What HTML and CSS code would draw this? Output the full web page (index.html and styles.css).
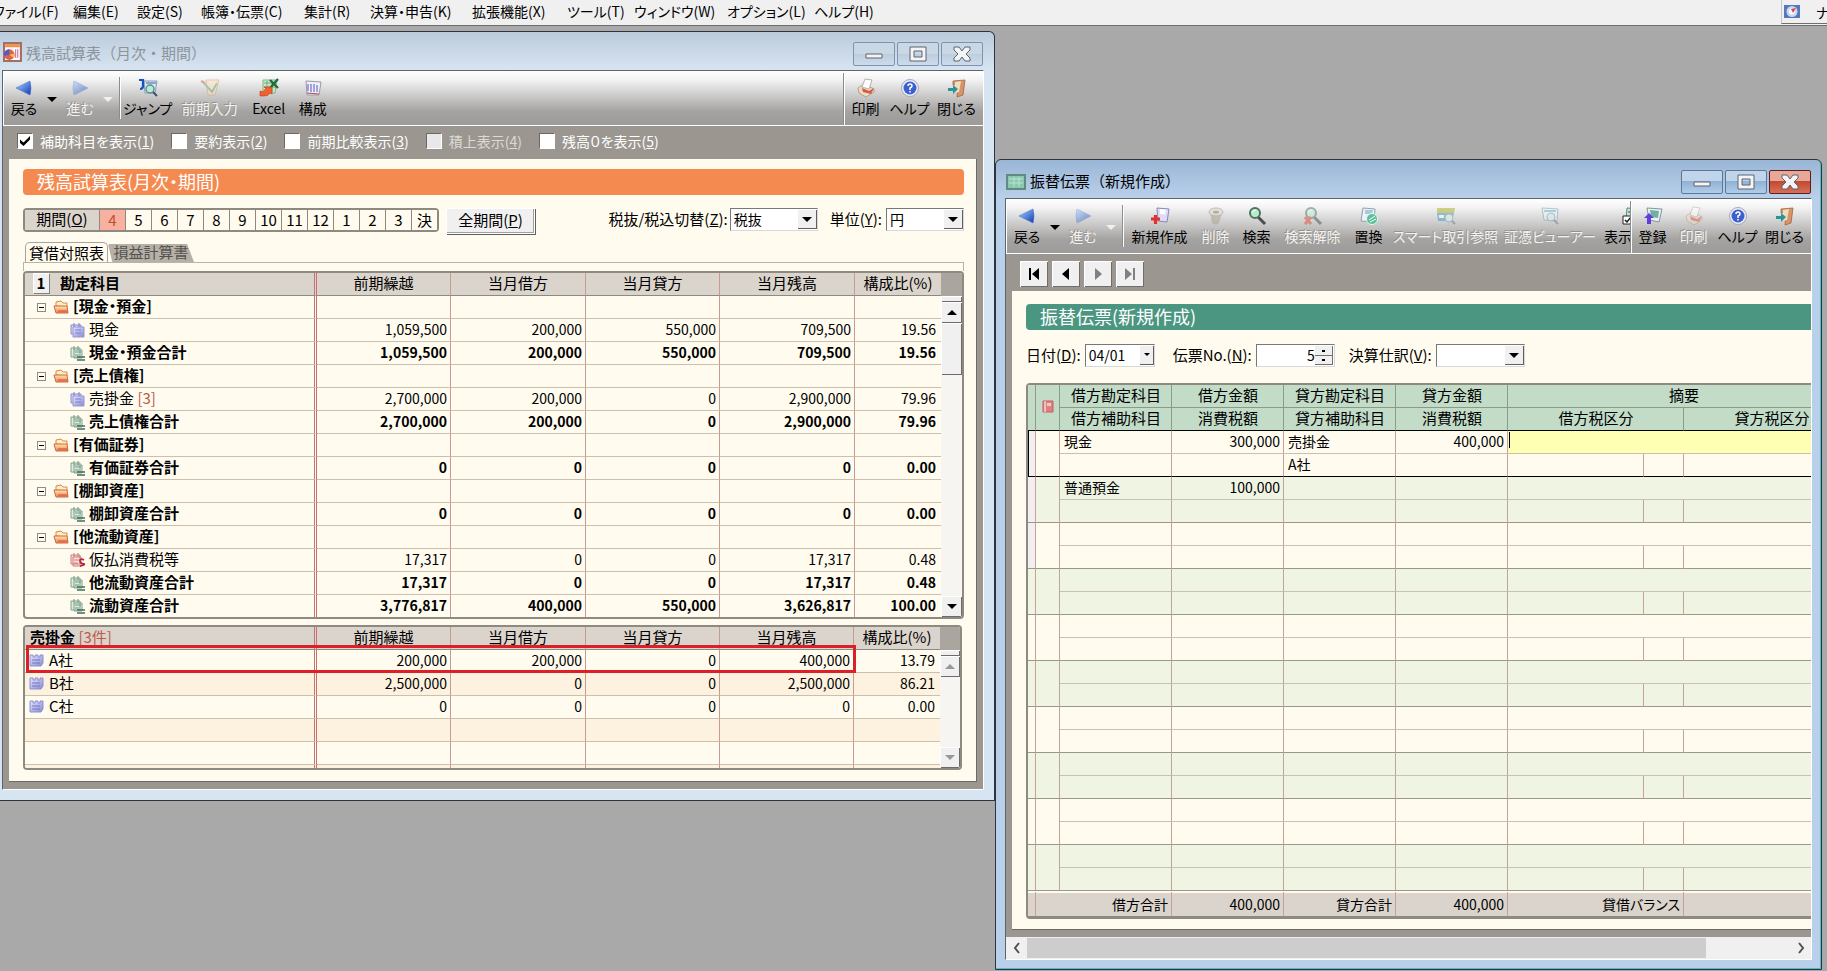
FILE: index.html
```html
<!DOCTYPE html>
<html lang="ja">
<head>
  <meta charset="UTF-8">
  <meta name="viewport" content="width=device-width, initial-scale=1.0">
  <title>残高試算表・振替伝票</title>
  <link rel="stylesheet" href="styles.css">
</head>
<body>
  <svg class="symbols" aria-hidden="true">
    <defs>
      <linearGradient id="blue" x1="0" y1="0" x2="1" y2="1"><stop offset="0" stop-color="#a8d8ff"/><stop offset="1" stop-color="#1038b8"/></linearGradient>
      <linearGradient id="orange" x1="0" y1="0" x2="0" y2="1"><stop offset="0" stop-color="#ffe8b8"/><stop offset="1" stop-color="#f08048"/></linearGradient>
      <linearGradient id="lilac" x1="0" y1="0" x2="1" y2="1"><stop offset="0" stop-color="#e4e8ff"/><stop offset="1" stop-color="#8888d0"/></linearGradient>
      <symbol id="i-back" viewBox="0 0 20 20"><path d="M2 10 16 3Q18 10 16 17Z" fill="url(#blue)" stroke="#4a78c8" stroke-width=".6"/></symbol>
      <symbol id="i-next" viewBox="0 0 20 20"><path d="M18 10 4 3Q2 10 4 17Z" fill="url(#blue)" stroke="#4a78c8" stroke-width=".6"/></symbol>
      <symbol id="i-jump" viewBox="0 0 20 20"><path d="M6 3h13l-2 12H7z" fill="#dce6f4" stroke="#8c9cb4"/><path d="M8 4h10v2H8z" fill="#88a4d0"/><path d="M1 2h4v6q0 3-3 3" fill="none" stroke="#1c50c0" stroke-width="2.2"/><circle cx="12" cy="11" r="4" fill="#b8ecd0" stroke="#5a8c94" stroke-width="1.4"/><path d="m15 14 4 4" stroke="#405070" stroke-width="2"/></symbol>
      <symbol id="i-entry" viewBox="0 0 20 20"><path d="M6 2h13l-4 15H8z" fill="#fce4c0" stroke="#d8a070"/><path d="m2 3 10 11 5-9" fill="none" stroke="#70a878" stroke-width="2"/><path d="m1 3 4 2" stroke="#e06048" stroke-width="2"/></symbol>
      <symbol id="i-excel" viewBox="0 0 20 20"><path d="M4 2h14l-2 13H4z" fill="#c8e8cc" stroke="#80b088"/><path d="M5 5h12M5 9h12M8 3v11M13 3v11" stroke="#70a878"/><path d="m11 2 8 8M19 1l-8 9" stroke="#1c6c38" stroke-width="2.2"/><path d="M1 18v-5l3 1 3-4-2-1h8v7l-2-1-3 3-2-1v1z" fill="#f06030" stroke="#c83c18" stroke-width=".6"/></symbol>
      <symbol id="i-build" viewBox="0 0 20 20"><path d="m3 3 15 1-2 13H4z" fill="#f0f0fa" stroke="#9c98a8"/><path d="M5 6v7M8 6v8M11 6v8M14 7v7" stroke="#7070c8" stroke-width="1.2"/><path d="M4 15l12 1" stroke="#b04848"/></symbol>
      <symbol id="i-print" viewBox="0 0 20 20"><path d="m2 10 6-4 10 5v3l-8 5-7-4z" fill="#e8dcc4" stroke="#a89474" stroke-width=".8"/><path d="m6 9 3-8 7 1-3 9z" fill="#fff" stroke="#a8a0a0" stroke-width=".8"/><path d="m6 10 7 3 5-3-3 6-8-2z" fill="#d85840"/></symbol>
      <symbol id="i-help" viewBox="0 0 20 20"><circle cx="10" cy="10" r="8.5" fill="#eceef8" stroke="#a4a8b8"/><circle cx="10" cy="10" r="6.5" fill="#3c60d0"/><path d="M8 8q0-2 2-2t2 2q0 1-2 2v2M10 13v1.400" fill="none" stroke="#fff" stroke-width="1.500"/></symbol>
      <symbol id="i-exit" viewBox="0 0 20 20"><path d="m6 3 12-1-2 15-6 2 1-13-5 1z" fill="#d89468" stroke="#9c6444" stroke-width=".8"/><path d="m8 4 6-1-2 11-4 1z" fill="#f0dcc0"/><path d="M1 10h5V7l5 4-5 5v-3H1z" fill="#2c9494"/></symbol>
      <symbol id="i-new" viewBox="0 0 20 20"><path d="m7 2 12 1-2 13-9-1z" fill="#dcdcf4" stroke="#8888b8"/><path d="m10 3 6 .500-1 5-5-.500z" fill="#fff"/><path d="M1 13h9M5.500 9v9" stroke="#e03030" stroke-width="3.200"/></symbol>
      <symbol id="i-trash" viewBox="0 0 20 20"><path d="m4 6 2 11q4 3 7 0l3-10z" fill="#a8a090"/><ellipse cx="10" cy="6" rx="7" ry="4" fill="#dcd8cc" stroke="#908878"/><ellipse cx="10" cy="6" rx="3" ry="1.500" fill="#807868"/></symbol>
      <symbol id="i-find" viewBox="0 0 20 20"><path d="m11 11 7 7" stroke="#4c4c54" stroke-width="3"/><circle cx="8" cy="7" r="5" fill="#b8ecc8" stroke="#4c7464" stroke-width="2"/><path d="M5 7q1-3 4-3" fill="none" stroke="#fff"/></symbol>
      <symbol id="i-unfind" viewBox="0 0 20 20"><use href="#i-find"/><path d="m2 11 6 7M8 11l-6 7" stroke="#e04838" stroke-width="3"/></symbol>
      <symbol id="i-swap" viewBox="0 0 20 20"><path d="m4 2 12 1-1 13-13-1z" fill="#eef2f8" stroke="#90a0b0"/><path d="M6 4h8l-1 4H6z" fill="#a8c8e0"/><circle cx="13" cy="13" r="5.5" fill="#58c098" stroke="#e4f8f0"/><path d="m10 14 6-4M11 16l6-3" stroke="#fff"/></symbol>
      <symbol id="i-smart" viewBox="0 0 20 20"><path d="M1 2h18l-1 5H1z" fill="#a8b020"/><path d="M1 7h17l-2 8H2z" fill="#3898c0"/><path d="M3 9h5v3H3z" fill="#fff"/><circle cx="13" cy="12" r="4" fill="#d8f0f0" stroke="#68a0b0"/><path d="m16 15 3 3" stroke="#70788c" stroke-width="2"/></symbol>
      <symbol id="i-view" viewBox="0 0 20 20"><path d="m2 2 16 1-1 12-13-1z" fill="#eef4f8" stroke="#70a0b8"/><path d="M4 5h12" stroke="#70b0c8" stroke-width="2"/><circle cx="11" cy="11" r="4" fill="#d8f0f0" stroke="#68a0b0"/><path d="m14 14 4 4" stroke="#70788c" stroke-width="2"/></symbol>
      <symbol id="i-show" viewBox="0 0 20 20"><path d="m5 2 13 1-1 12H4z" fill="#c8e4d8" stroke="#608878"/><path d="M6 5h11v2H6z" fill="#68a890"/><path d="M1 10h8v8H1z" fill="#fff" stroke="#222"/><path d="m3 14 2 2 4-5" fill="none" stroke="#111" stroke-width="1.400"/></symbol>
      <symbol id="i-save" viewBox="0 0 20 20"><path d="m4 2 15 1-3 13-10-2z" fill="#e8f0f0" stroke="#8098a0"/><path d="m7 4 9 1-1 7-7-1z" fill="#70b0a0"/><path d="M6 7 1 12h3v6h4v-6h3z" fill="#6040d8"/></symbol>
      <symbol id="i-folder" viewBox="0 0 16 16"><path d="M3 7V3l5-1 2 2h4v4z" fill="#fff0c0" stroke="#d88850"/><path d="M1 7h13l1 7H3z" fill="url(#orange)" stroke="#c86840"/><path d="M5 12h9" stroke="#d84838"/></symbol>
      <symbol id="i-item" viewBox="0 0 16 16"><path d="M2 3h10v9H2z" fill="#d8dcf8" stroke="#8888c8"/><path d="M4 5h11v10H4z" fill="url(#lilac)" stroke="#9898d8"/><path d="M5 1v4M10 1v4M6 8h6M6 11h6" stroke="#8080c8"/></symbol>
      <symbol id="i-sum" viewBox="0 0 16 16"><path d="M2 3h9v9H2zM5 5h8v8H5z" fill="#e0eade" stroke="#80a490"/><path d="M5 1v4M9 1v4M6 7h6M6 10h4" stroke="#709880"/><path d="M8 12h8M8 15h8" stroke="#40705c" stroke-width="1.600"/></symbol>
      <symbol id="i-tax" viewBox="0 0 16 16"><path d="M2 3h9v9H2zM4 5h8v9H4z" fill="#fbe4e0" stroke="#d07878"/><path d="M5 1v4M9 1v4M5 8h6M5 11h4" stroke="#d07878"/><path d="M15 8q-4-2-4 .800t3.500 3-3.500 2.500" fill="none" stroke="#b02840" stroke-width="1.600"/></symbol>
      <symbol id="i-sub" viewBox="0 0 16 16"><path d="M1 2h3v2h2V2h3v2h2V2h3v8l-2 3H1z" fill="url(#lilac)" stroke="#8c90d0"/><path d="M3 7h8M3 10h8" stroke="#7478c0"/></symbol>
      <symbol id="i-min" viewBox="0 0 24 18"><path d="M4 9h16v4H4z" fill="#f4f4f4" stroke="#5c6470"/></symbol>
      <symbol id="i-max" viewBox="0 0 24 18"><path fill-rule="evenodd" d="M4 2h16v14H4zM8 6v6h8V6z" fill="#f4f4f4" stroke="#5c6470"/></symbol>
      <symbol id="i-close" viewBox="0 0 24 18"><path d="M4 2h5l3 4 3-4h5v3l-4 4 4 4v3h-5l-3-4-3 4H4v-3l4-4-4-4z" fill="#f4f4f4" stroke="#5c6470"/></symbol>
    </defs>
  </svg>

  <nav class="menubar">
    <div class="menu">
      <button>ファイル(F)</button>
      <button>編集(E)</button>
      <button>設定(S)</button>
      <button>帳簿・伝票(C)</button>
      <button>集計(R)</button>
      <button>決算・申告(K)</button>
      <button>拡張機能(X)</button>
      <button>ツール(T)</button>
      <button>ウィンドウ(W)</button>
      <button>オプション(L)</button>
      <button>ヘルプ(H)</button>
    </div>
    <div class="navi">
      <svg viewBox="0 0 16 13"><path d="M0 0h16v13H0z" fill="#5478c0"/><circle cx="8" cy="6.500" r="5.5" fill="#c8d8f0"/><circle cx="8" cy="6.500" r="3" fill="#fff"/><path d="m7 4 2 4 3-5z" fill="#d84848"/></svg>
      <span>ナ</span>
    </div>
  </nav>

  <main class="desktop">
    <!-- 残高試算表 -->
    <section class="window balance">
      <header class="titlebar">
        <svg class="app-icon" viewBox="0 0 18 19"><path d="M1 1h16v17H1z" fill="#fff" stroke="#a07060" stroke-width="2"/><path d="M2 2h14v3H2z" fill="#f09050"/><circle cx="6" cy="12" r="5" fill="#e06048"/><path d="M6 12V7a5 5 0 0 0-5 6z" fill="#5058d0"/><path d="m6 12 4 3a5 5 0 0 0 1-4z" fill="#f8c040"/><path d="M12 7v8M14 7v8" stroke="#d060a0"/></svg>
        <h1>残高試算表（月次・期間）</h1>
        <button class="win-btn" aria-label="最小化"><svg><use href="#i-min"/></svg></button>
        <button class="win-btn" aria-label="最大化"><svg><use href="#i-max"/></svg></button>
        <button class="win-btn" aria-label="閉じる"><svg><use href="#i-close"/></svg></button>
      </header>
      <div class="frame">
        <div class="toolbar">
          <div class="tools">
            <button class="tool nav-tool"><svg><use href="#i-back"/></svg>戻る</button>
            <button class="drop" aria-label="履歴"></button>
            <button class="tool nav-tool" disabled><svg><use href="#i-next"/></svg>進む</button>
            <button class="drop" aria-label="履歴" disabled></button>
            <span class="sep"></span>
            <button class="tool"><svg><use href="#i-jump"/></svg>ジャンプ</button>
            <button class="tool wide" disabled><svg><use href="#i-entry"/></svg>前期入力</button>
            <button class="tool mid"><svg><use href="#i-excel"/></svg>Excel</button>
            <button class="tool"><svg><use href="#i-build"/></svg>構成</button>
          </div>
          <div class="tools-end">
            <button class="tool"><svg><use href="#i-print"/></svg>印刷</button>
            <button class="tool mid"><svg><use href="#i-help"/></svg>ヘルプ</button>
            <button class="tool mid"><svg><use href="#i-exit"/></svg>閉じる</button>
          </div>
        </div>
        <div class="options">
          <label><input type="checkbox" checked>補助科目を表示(<u>1</u>)</label>
          <label><input type="checkbox">要約表示(<u>2</u>)</label>
          <label><input type="checkbox">前期比較表示(<u>3</u>)</label>
          <label class="off"><input type="checkbox" disabled>積上表示(<u>4</u>)</label>
          <label><input type="checkbox">残高０を表示(<u>5</u>)</label>
        </div>
        <div class="panel">
          <h2 class="heading">残高試算表(月次・期間)</h2>
          <div class="controls">
            <div class="period">
              <span class="period-label">期間(<u>O</u>)</span>
              <button class="on">4</button><button>5</button><button>6</button><button>7</button><button>8</button><button>9</button><button>10</button><button>11</button><button>12</button><button>1</button><button>2</button><button>3</button><button>決</button>
            </div>
            <button class="push">全期間(<u>P</u>)</button>
            <label class="right" for="tax">税抜/税込切替(<u>Z</u>):</label>
            <span class="combo tax"><select id="tax"><option>税抜</option><option>税込</option></select></span>
            <label class="unit-label" for="unit">単位(<u>Y</u>):</label>
            <span class="combo unit"><select id="unit"><option>円</option><option>千円</option></select></span>
          </div>
          <div class="tabs">
            <button class="tab active">貸借対照表</button>
            <button class="tab">損益計算書</button>
          </div>
          <div class="tab-line"></div>

          <div class="grid">
            <table class="accounts">
              <colgroup><col><col class="w134"><col class="w135"><col class="w134"><col class="w135"><col class="w86"></colgroup>
              <thead>
                <tr><th class="name"><button class="level">1</button>勘定科目</th><th>前期繰越</th><th>当月借方</th><th>当月貸方</th><th>当月残高</th><th>構成比(%)</th></tr>
              </thead>
              <tbody>
                <tr class="group"><td><i class="minus"></i><svg><use href="#i-folder"/></svg>[現金・預金]</td><td></td><td></td><td></td><td></td><td></td></tr>
                <tr><td class="child"><svg><use href="#i-item"/></svg>現金</td><td>1,059,500</td><td>200,000</td><td>550,000</td><td>709,500</td><td>19.56</td></tr>
                <tr class="sum"><td class="child"><svg><use href="#i-sum"/></svg>現金・預金合計</td><td>1,059,500</td><td>200,000</td><td>550,000</td><td>709,500</td><td>19.56</td></tr>
                <tr class="group"><td><i class="minus"></i><svg><use href="#i-folder"/></svg>[売上債権]</td><td></td><td></td><td></td><td></td><td></td></tr>
                <tr><td class="child"><svg><use href="#i-item"/></svg>売掛金 <span class="count">[3]</span></td><td>2,700,000</td><td>200,000</td><td>0</td><td>2,900,000</td><td>79.96</td></tr>
                <tr class="sum"><td class="child"><svg><use href="#i-sum"/></svg>売上債権合計</td><td>2,700,000</td><td>200,000</td><td>0</td><td>2,900,000</td><td>79.96</td></tr>
                <tr class="group"><td><i class="minus"></i><svg><use href="#i-folder"/></svg>[有価証券]</td><td></td><td></td><td></td><td></td><td></td></tr>
                <tr class="sum"><td class="child"><svg><use href="#i-sum"/></svg>有価証券合計</td><td>0</td><td>0</td><td>0</td><td>0</td><td>0.00</td></tr>
                <tr class="group"><td><i class="minus"></i><svg><use href="#i-folder"/></svg>[棚卸資産]</td><td></td><td></td><td></td><td></td><td></td></tr>
                <tr class="sum"><td class="child"><svg><use href="#i-sum"/></svg>棚卸資産合計</td><td>0</td><td>0</td><td>0</td><td>0</td><td>0.00</td></tr>
                <tr class="group"><td><i class="minus"></i><svg><use href="#i-folder"/></svg>[他流動資産]</td><td></td><td></td><td></td><td></td><td></td></tr>
                <tr><td class="child"><svg><use href="#i-tax"/></svg>仮払消費税等</td><td>17,317</td><td>0</td><td>0</td><td>17,317</td><td>0.48</td></tr>
                <tr class="sum"><td class="child"><svg><use href="#i-sum"/></svg>他流動資産合計</td><td>17,317</td><td>0</td><td>0</td><td>17,317</td><td>0.48</td></tr>
                <tr class="sum last"><td class="child"><svg><use href="#i-sum"/></svg>流動資産合計</td><td>3,776,817</td><td>400,000</td><td>550,000</td><td>3,626,817</td><td>100.00</td></tr>
              </tbody>
            </table>
            <div class="vscroll">
              <div class="corner"></div>
              <div class="track"><div class="splitter"></div><button class="up" aria-label="上へ"></button><div class="thumb"></div><button class="down" aria-label="下へ"></button></div>
            </div>
          </div>

          <div class="grid sub">
            <table class="accounts">
              <colgroup><col><col class="w134"><col class="w135"><col class="w134"><col class="w134"><col class="w86"></colgroup>
              <thead>
                <tr><th class="name">売掛金 <span class="count">[3件]</span></th><th>前期繰越</th><th>当月借方</th><th>当月貸方</th><th>当月残高</th><th>構成比(%)</th></tr>
              </thead>
              <tbody>
                <tr><td><svg><use href="#i-sub"/></svg>A社</td><td>200,000</td><td>200,000</td><td>0</td><td>400,000</td><td>13.79</td></tr>
                <tr><td><svg><use href="#i-sub"/></svg>B社</td><td>2,500,000</td><td>0</td><td>0</td><td>2,500,000</td><td>86.21</td></tr>
                <tr><td><svg><use href="#i-sub"/></svg>C社</td><td>0</td><td>0</td><td>0</td><td>0</td><td>0.00</td></tr>
                <tr><td></td><td></td><td></td><td></td><td></td><td></td></tr>
                <tr><td></td><td></td><td></td><td></td><td></td><td></td></tr>
                <tr class="cut"><td></td><td></td><td></td><td></td><td></td><td></td></tr>
              </tbody>
            </table>
            <div class="vscroll idle">
              <div class="corner"></div>
              <div class="track"><div class="splitter"></div><button class="up" aria-label="上へ" disabled></button><button class="down" aria-label="下へ" disabled></button></div>
            </div>
            <div class="marker"></div>
          </div>
        </div>
      </div>
    </section>

    <!-- 振替伝票 -->
    <section class="window voucher">
      <header class="titlebar">
        <svg class="app-icon" viewBox="0 0 20 16"><path d="M1 1h18v14H1z" fill="#8cc8b0" stroke="#608c80" stroke-width="2"/><path d="M3 5h14M3 9h14M8 3v10M13 3v10" stroke="#b8e4d0"/></svg>
        <h1>振替伝票（新規作成）</h1>
        <button class="win-btn" aria-label="最小化"><svg><use href="#i-min"/></svg></button>
        <button class="win-btn" aria-label="最大化"><svg><use href="#i-max"/></svg></button>
        <button class="win-btn close" aria-label="閉じる"><svg><use href="#i-close"/></svg></button>
      </header>
      <div class="frame">
        <div class="toolbar">
          <div class="tools">
            <button class="tool nav-tool"><svg><use href="#i-back"/></svg>戻る</button>
            <button class="drop" aria-label="履歴"></button>
            <button class="tool nav-tool" disabled><svg><use href="#i-next"/></svg>進む</button>
            <button class="drop" aria-label="履歴" disabled></button>
            <span class="sep"></span>
            <button class="tool wide"><svg><use href="#i-new"/></svg>新規作成</button>
            <button class="tool" disabled><svg><use href="#i-trash"/></svg>削除</button>
            <button class="tool"><svg><use href="#i-find"/></svg>検索</button>
            <button class="tool wide" disabled><svg><use href="#i-unfind"/></svg>検索解除</button>
            <button class="tool"><svg><use href="#i-swap"/></svg>置換</button>
            <button class="tool extra" disabled><svg><use href="#i-smart"/></svg>スマート取引参照</button>
            <button class="tool" disabled><svg><use href="#i-view"/></svg>証憑ビューアー</button>
            <button class="tool show"><svg><use href="#i-show"/></svg>表示</button>
          </div>
          <div class="tools-end">
            <button class="tool"><svg><use href="#i-save"/></svg>登録</button>
            <button class="tool" disabled><svg><use href="#i-print"/></svg>印刷</button>
            <button class="tool mid"><svg><use href="#i-help"/></svg>ヘルプ</button>
            <button class="tool mid"><svg><use href="#i-exit"/></svg>閉じる</button>
          </div>
        </div>
        <div class="pager">
          <button aria-label="先頭"><svg viewBox="0 0 12 12"><path d="M1 0h2v12H1zM11 0v12L4 6z"/></svg></button>
          <button aria-label="前"><svg viewBox="0 0 12 12"><path d="M9 0v12L2 6z"/></svg></button>
          <button aria-label="次" disabled><svg viewBox="0 0 12 12"><path d="M3 0v12l7-6z"/></svg></button>
          <button aria-label="最後" disabled><svg viewBox="0 0 12 12"><path d="M9 0h2v12H9zM1 0v12l7-6z"/></svg></button>
        </div>
        <div class="panel">
          <h2 class="heading">振替伝票(新規作成)</h2>
          <div class="controls">
            <label for="date">日付(<u>D</u>):</label>
            <span class="combo date"><input id="date" type="text" value="04/01"></span>
            <label for="no">伝票No.(<u>N</u>):</label>
            <span class="spin"><input id="no" type="text" value="5"><span class="spin-btns"><button aria-label="増やす"></button><button aria-label="減らす"></button></span></span>
            <label for="closing">決算仕訳(<u>V</u>):</label>
            <span class="combo closing"><select id="closing"><option></option></select></span>
          </div>
          <table class="journal">
            <colgroup><col class="w8"><col class="w24"><col class="w112"><col class="w112"><col class="w112"><col class="w112"><col class="w136"><col class="w40"><col></colgroup>
            <thead>
              <tr><th rowspan="2"></th><th rowspan="2"><svg viewBox="0 0 12 13"><path d="M1 1h10v11H1z" fill="#e08080" stroke="#c06060"/><path d="M3 1v11" stroke="#fff"/><path d="M5 3h4v3H5z" fill="#f4c8c0"/></svg></th><th>借方勘定科目</th><th>借方金額</th><th>貸方勘定科目</th><th>貸方金額</th><th colspan="3">摘要</th></tr>
              <tr><th>借方補助科目</th><th>消費税額</th><th>貸方補助科目</th><th>消費税額</th><th colspan="2">借方税区分</th><th>貸方税区分</th></tr>
            </thead>
            <tbody class="current">
              <tr><td rowspan="2" class="mark"></td><td rowspan="2"></td><td>現金</td><td>300,000</td><td>売掛金</td><td>400,000</td><td colspan="3" class="edit"><input type="text" aria-label="摘要"></td></tr>
              <tr><td></td><td></td><td>A社</td><td></td><td></td><td></td><td></td></tr>
            </tbody>
            <tbody>
              <tr><td rowspan="2" class="mark"></td><td rowspan="2"></td><td>普通預金</td><td>100,000</td><td></td><td></td><td colspan="3"></td></tr>
              <tr><td></td><td></td><td></td><td></td><td></td><td></td><td></td></tr>
            </tbody>
            <tbody>
              <tr><td rowspan="2" class="mark"></td><td rowspan="2"></td><td></td><td></td><td></td><td></td><td colspan="3"></td></tr>
              <tr><td></td><td></td><td></td><td></td><td></td><td></td><td></td></tr>
            </tbody>
            <tbody>
              <tr><td rowspan="2"></td><td rowspan="2"></td><td></td><td></td><td></td><td></td><td colspan="3"></td></tr>
              <tr><td></td><td></td><td></td><td></td><td></td><td></td><td></td></tr>
            </tbody>
            <tbody>
              <tr><td rowspan="2"></td><td rowspan="2"></td><td></td><td></td><td></td><td></td><td colspan="3"></td></tr>
              <tr><td></td><td></td><td></td><td></td><td></td><td></td><td></td></tr>
            </tbody>
            <tbody>
              <tr><td rowspan="2"></td><td rowspan="2"></td><td></td><td></td><td></td><td></td><td colspan="3"></td></tr>
              <tr><td></td><td></td><td></td><td></td><td></td><td></td><td></td></tr>
            </tbody>
            <tbody>
              <tr><td rowspan="2"></td><td rowspan="2"></td><td></td><td></td><td></td><td></td><td colspan="3"></td></tr>
              <tr><td></td><td></td><td></td><td></td><td></td><td></td><td></td></tr>
            </tbody>
            <tbody>
              <tr><td rowspan="2"></td><td rowspan="2"></td><td></td><td></td><td></td><td></td><td colspan="3"></td></tr>
              <tr><td></td><td></td><td></td><td></td><td></td><td></td><td></td></tr>
            </tbody>
            <tbody>
              <tr><td rowspan="2"></td><td rowspan="2"></td><td></td><td></td><td></td><td></td><td colspan="3"></td></tr>
              <tr><td></td><td></td><td></td><td></td><td></td><td></td><td></td></tr>
            </tbody>
            <tbody>
              <tr><td rowspan="2"></td><td rowspan="2"></td><td></td><td></td><td></td><td></td><td colspan="3"></td></tr>
              <tr><td></td><td></td><td></td><td></td><td></td><td></td><td></td></tr>
            </tbody>
            <tfoot>
              <tr><td></td><td colspan="2">借方合計</td><td>400,000</td><td>貸方合計</td><td>400,000</td><td colspan="2">貸借バランス</td><td></td></tr>
            </tfoot>
          </table>
        </div>
        <div class="hscroll">
          <button aria-label="左へ"><svg viewBox="0 0 8 12"><path d="M6 1 2 6l4 5"/></svg></button>
          <div class="htrack"><div class="hthumb"></div></div>
          <button aria-label="右へ"><svg viewBox="0 0 8 12"><path d="m2 1 4 5-4 5"/></svg></button>
        </div>
      </div>
    </section>
  </main>
</body>
</html>
```
FILE: styles.css
```css
* {
  box-sizing: border-box;
}

body {
  margin: 0;
  height: 100vh;
  overflow: hidden;
  display: flex;
  flex-direction: column;
  background-color: #a9a9a9;
  color: #000;
  font-family: "Noto Sans CJK JP", sans-serif;
  font-size: 15px;
  line-height: 20px;
  font-feature-settings: "palt";
}

button, input, select {
  margin: 0;
  padding: 0;
  border: none;
  background: none;
  color: inherit;
  font: inherit;
  font-feature-settings: inherit;
}

h1, h2 {
  margin: 0;
  font-weight: normal;
}

.symbols {
  position: absolute;
  width: 0;
  height: 0;
}

/* menu */
.menubar {
  display: flex;
  flex: none;
  justify-content: space-between;
  height: 26px;
  background-color: #f0f0f0;
  border-bottom: 1px solid #6e6e6e;
  font-size: 14px;
  white-space: nowrap;
}

.menu {
  display: grid;
  grid-template-columns: 80px 64px 64px 103px 66px 102px 95px 67px 93px 87px auto;
  justify-items: start;
  margin-left: -7px;
  padding-bottom: 4px;
}

.navi {
  display: flex;
  align-items: center;
  gap: 16px;
  width: 46px;
  height: 24px;
  padding-left: 2px;
  overflow: hidden;
  border-left: 1px solid #c8c8c8;
  border-bottom: 1px solid #6e6e6e;
}

.navi svg {
  flex: none;
  width: 16px;
  height: 13px;
}

/* windows */
.desktop {
  flex: 1;
  min-height: 0;
  display: grid;
  grid-template-columns: 995fr 832fr;
}

.window {
  display: flex;
  flex-direction: column;
  min-width: 0;
  border: 1px solid #2c3440;
  border-radius: 6px 6px 0 0;
}

.balance {
  align-self: start;
  margin-top: 5px;
  padding: 0 10px 10px 2px;
  border-left: none;
  border-top-left-radius: 0;
  background: linear-gradient(#bccbdb, #d7e4f2 38px);
}

.voucher {
  margin: 133px 5px 1px 0;
  padding: 0 9px 9px;
  background: linear-gradient(#9ab6d6, #b9d0ea 38px);
  box-shadow: inset -1px -1px #48c0d0;
}

.titlebar {
  display: flex;
  align-items: flex-start;
  height: 38px;
  padding: 10px 1px 0 1px;
}

.balance .titlebar {
  color: #8c949c;
}

.titlebar h1 {
  flex: 1;
  margin: 1px 0 0 4px;
  font-size: 15px;
  font-feature-settings: normal;
}

.app-icon {
  width: 19px;
  height: 20px;
}

.voucher .app-icon {
  width: 20px;
  height: 16px;
  margin-top: 4px;
}

.win-btn {
  width: 42px;
  height: 24px;
  margin-left: 2px;
  border: 1px solid #7c94b0;
  border-radius: 2px;
  background: linear-gradient(#cad8e6 50%, #bccddf 50%, #cddceb);
}

.voucher .win-btn {
  border-color: #5c7898;
  background: linear-gradient(#c0d4ea 45%, #8fb0d4 45%, #b0cce8);
}

.voucher .win-btn.close {
  border-color: #601c18;
  background: linear-gradient(#e8a898 45%, #c04830 45%, #d87058);
}

.win-btn svg {
  display: block;
  width: 24px;
  height: 18px;
  margin: 0 auto;
}

.frame {
  flex: 1;
  min-height: 0;
  display: flex;
  flex-direction: column;
  border: 1px solid #fff;
  border-top: 1px solid #5f6468;
  border-left: 1px solid #5f6468;
  background-color: #9b9790;
}

/* toolbar */
.toolbar {
  display: flex;
  height: 55px;
  border-left: 1px solid #fff;
  border-bottom: 1px solid #fff;
  background: linear-gradient(#fff, #f4f4f4 15%, #a5a3a2 75%, #9d9b9a);
  font-size: 14px;
}

.tools {
  display: flex;
  flex: 1;
  min-width: 0;
  overflow: hidden;
}

.tools-end {
  display: flex;
  flex: none;
  margin-top: 2px;
  padding-right: 3px;
  border-left: 1px solid #fff;
  box-shadow: -1px 0 #8c8c8c;
}

.tool {
  flex: none;
  display: flex;
  flex-direction: column;
  align-items: center;
  min-width: 41px;
  padding: 7px 2px 0;
  white-space: nowrap;
}

.tools-end .tool {
  padding-top: 5px;
}

.nav-tool {
  min-width: 40px;
}

.mid {
  min-width: 47px;
}

.wide {
  min-width: 71px;
}

.extra {
  min-width: 113px;
}

.tool svg {
  width: 20px;
  height: 20px;
}

.tool:disabled {
  color: #f4f2ee;
  text-shadow: -1px -1px 0 #949290;
}

.tool:disabled svg {
  opacity: 0.5;
}

.show {
  align-items: flex-start;
  padding-left: 6px;
}

.show svg {
  margin-left: 18px;
}

.drop {
  flex: none;
  width: 16px;
  height: 54px;
}

.drop::before {
  content: "";
  display: block;
  margin: 2px auto 0;
  width: 0;
  border: 5px solid transparent;
  border-top-color: #000;
  border-bottom: none;
}

.drop:disabled::before {
  border-top-color: #f0f0f0;
}

.sep {
  flex: none;
  width: 2px;
  margin: 6px 0 6px 3px;
  border-left: 1px solid #8c8c8c;
  background-color: #fff;
}

.options {
  display: flex;
  gap: 17px;
  height: 33px;
  padding: 5px 14px 0;
  color: #fff;
  font-size: 14px;
}

.options label {
  display: flex;
  align-items: center;
  height: 20px;
}

.options .off {
  color: #dcdad6;
}

.options input {
  appearance: none;
  width: 16px;
  height: 16px;
  margin-right: 7px;
  background-color: #fff;
  border: 1px solid #fff;
  border-top-color: #6c6864;
  border-left-color: #6c6864;
}

.options input:disabled {
  background-color: #e8e8e8;
}

.options input:checked::before {
  content: "";
  display: block;
  width: 10px;
  height: 10px;
  margin: 2px;
  background-color: #000;
  clip-path: polygon(0 35%, 35% 65%, 100% 0, 100% 35%, 35% 100%, 0 70%);
}

/* panel */
.panel {
  margin: 0 6px 7px;
  padding: 10px 12px 11px 14px;
  border: solid #6c6a66;
  border-width: 0 1px 1px 0;
  background-color: #fffbee;
}

.heading {
  height: 26px;
  padding-left: 14px;
  border-radius: 4px;
  background-color: #f58a50;
  color: #fff;
  font-size: 18px;
  line-height: 24px;
}

.controls {
  display: flex;
  align-items: flex-start;
  margin-top: 13px;
  height: 34px;
}

.controls label {
  margin-top: 1px;
  white-space: nowrap;
}

.controls .right {
  margin-left: auto;
}

.period {
  display: flex;
  height: 24px;
  border: 2px solid #8e8a80;
  border-radius: 4px;
  line-height: 18px;
}

.period-label {
  width: 74px;
  background-color: #dbd4cc;
  text-align: center;
}

.period button {
  width: 26px;
  border-left: 1px solid #8e8a80;
  background-color: #fffbee;
}

.period .on {
  background-color: #f8b0a0;
  color: #c05030;
}

.push {
  width: 89px;
  height: 26px;
  margin-left: 7px;
  padding-bottom: 2px;
  background-color: #f0f0f0;
  border: 1px solid #fff;
  box-shadow: inset -1px -1px #a0a0a0, 1px 1px #606060;
}

.combo, .spin {
  position: relative;
  height: 23px;
  padding: 1px;
  border: 1px solid #787878;
  border-right-color: #d8d8d8;
  border-bottom-color: #d8d8d8;
  background-color: #fff;
}

.combo select, .combo input {
  display: block;
  appearance: none;
  width: 100%;
  height: 18px;
  padding-left: 2px;
  font-size: 14px;
  line-height: 18px;
}

.combo::after {
  content: "";
  position: absolute;
  right: 0;
  top: 0;
  width: 20px;
  height: 20px;
  background-color: #f0f0f0;
  box-shadow: inset 1px 1px #fff, inset -1px -1px #606060;
  pointer-events: none;
}

.combo::before {
  content: "";
  position: absolute;
  z-index: 1;
  right: 5px;
  top: 8px;
  border: 5px solid transparent;
  border-top-color: #000;
  border-bottom: none;
  pointer-events: none;
}

.tax {
  width: 88px;
  margin: 0 12px 0 2px;
}

.unit {
  width: 78px;
}

.unit-label {
  margin-right: 4px;
}

.tabs {
  display: flex;
  height: 20px;
  padding-left: 2px;
  line-height: 18px;
}

.tab {
  width: 83px;
  border: 1px solid #a8a49c;
  border-bottom: none;
  border-radius: 5px 5px 0 0;
  white-space: nowrap;
}

.tab:not(.active) {
  width: 86px;
  border: none;
  background-color: #b5b1a9;
  color: #55524c;
  clip-path: polygon(0 2px, 92% 2px, 100% 100%, 5% 100%);
}

.tab-line {
  height: 9px;
  border: 1px solid #b8b4a8;
  border-bottom: none;
}

/* tables */
.grid {
  position: relative;
  display: flex;
  border: 2px solid #8e8a80;
  border-radius: 4px;
  overflow: hidden;
}

.sub {
  margin: 6px 2px 0 0;
}

.accounts {
  flex: 1;
  min-width: 0;
  table-layout: fixed;
  border-collapse: separate;
  border-spacing: 0;
}

.w134 { width: 134px; }
.w135 { width: 135px; }
.w86 { width: 86px; }
.w8 { width: 8px; }
.w24 { width: 24px; }
.w112 { width: 112px; }
.w136 { width: 136px; }
.w40 { width: 40px; }

.accounts th, .accounts td {
  height: 23px;
  padding: 0 3px 2px 0;
  border-right: 1px solid #c99a90;
  border-bottom: 1px solid #cbbfae;
  font-size: 14px;
  font-weight: normal;
  line-height: 20px;
  text-align: right;
  white-space: nowrap;
}

.accounts th {
  padding: 0 0 2px;
  border-bottom-color: #8e8a80;
  background-color: #dbd4cc;
  font-size: 15px;
  text-align: center;
}

.accounts td:first-child, .accounts th:first-child {
  border-right: 3px double #c97070;
  text-align: left;
}

.accounts td:last-child {
  padding-right: 5px;
}

.accounts th:last-child, .accounts td:last-child {
  border-right: none;
}

.accounts th.name {
  font-weight: bold;
}

.sub th.name {
  padding-left: 5px;
}

.accounts .last td {
  height: 22px;
  border-bottom: none;
}

.accounts .group td, .accounts .sum td {
  font-weight: bold;
}

.accounts td:first-child {
  padding-left: 12px;
  font-size: 15px;
}

.accounts td.child {
  padding-left: 44px;
}

.sub .accounts td:first-child {
  padding-left: 4px;
}

.sub tbody tr:nth-child(even) {
  background-color: #fdf2e0;
}

.sub .cut td {
  height: 3px;
  padding-bottom: 0;
  border-bottom: none;
}

.accounts svg {
  width: 16px;
  height: 16px;
  margin-right: 4px;
  vertical-align: -3px;
}

.minus {
  display: inline-block;
  width: 9px;
  height: 9px;
  margin-right: 7px;
  border: 1px solid #8c8c8c;
  background: linear-gradient(#000, #000) center / 5px 1px no-repeat;
}

.level {
  width: 16px;
  height: 20px;
  margin: 0 11px 0 8px;
  background-color: #f0f0f0;
  box-shadow: inset 1px 1px #fff, 1px 1px #808080;
}

.count {
  color: #c05848;
  font-weight: normal;
}

.marker {
  position: absolute;
  left: 1px;
  top: 18px;
  width: 830px;
  height: 28px;
  border: 3px solid #dc2028;
}

/* scrollbars */
.vscroll {
  flex: none;
  display: flex;
  flex-direction: column;
  width: 21px;
}

.idle {
  width: 20px;
}

.corner {
  height: 23px;
  background-color: #aaa69f;
}

.track {
  flex: 1;
  display: flex;
  flex-direction: column;
  background-color: #f6f5f2;
}

.splitter, .thumb, .up, .down {
  flex: none;
  height: 21px;
  background-color: #f0f0f0;
  box-shadow: inset 1px 1px #fff, inset -1px -1px #6c6c6c;
}

.splitter {
  height: 6px;
}

.thumb {
  height: 52px;
}

.down {
  margin-top: auto;
}

.up::before, .down::before {
  content: "";
  display: block;
  width: 0;
  margin: 0 auto;
  border: 5px solid transparent;
}

.up::before {
  border-top: none;
  border-bottom-color: #000;
}

.down::before {
  border-bottom: none;
  border-top-color: #000;
}

.up:disabled::before {
  border-bottom-color: #989898;
}

.down:disabled::before {
  border-top-color: #989898;
}

/* voucher */
.pager {
  display: flex;
  gap: 4px;
  height: 37px;
  padding: 7px 14px 0;
}

.pager button {
  width: 28px;
  height: 26px;
  background-color: #f0f0f0;
  box-shadow: inset 1px 1px #fff, inset -1px -1px #706c68;
}

.pager svg {
  display: block;
  width: 12px;
  height: 12px;
  margin: 0 auto;
}

.pager button:disabled {
  fill: #808080;
}

.voucher .panel {
  flex: 1;
  min-height: 0;
  margin: 0 0 7px 6px;
  padding: 13px 0 0 14px;
  border-right: none;
  overflow: hidden;
}

.voucher .heading {
  border-radius: 4px 0 0 4px;
  background-color: #4b9681;
}

.voucher .controls {
  margin-top: 14px;
  height: 39px;
}

.voucher .controls label {
  margin-right: 4px;
}

.date {
  width: 70px;
  margin-right: 18px;
}

.date::after {
  width: 15px;
}

.date::before {
  right: 4px;
  border-width: 3px;
}

.spin {
  display: flex;
  width: 79px;
  margin-right: 14px;
}

.spin input {
  flex: 1;
  min-width: 0;
  height: 18px;
  font-size: 14px;
  line-height: 18px;
  text-align: right;
}

.spin-btns {
  display: flex;
  flex-direction: column;
  width: 18px;
}

.spin-btns button {
  flex: 1;
  background: linear-gradient(#000, #000) center / 3px 2px no-repeat #f0f0f0;
  box-shadow: inset -1px -1px #707070;
}

.closing {
  width: 89px;
}

.journal {
  width: 836px;
  table-layout: fixed;
  border: solid #8e8a80;
  border-width: 2px 2px 3px;
  border-radius: 4px;
  border-collapse: separate;
  border-spacing: 0;
}

.journal th, .journal td {
  height: 23px;
  padding: 0 3px 2px 4px;
  border-right: 1px solid #c4a498;
  border-bottom: 1px solid #c8c0b0;
  font-size: 14px;
  font-weight: normal;
  line-height: 20px;
  white-space: nowrap;
}

.journal th {
  border-color: #8e9a88;
  background-color: #c2dcc8;
  font-size: 15px;
  text-align: center;
}

.journal th svg {
  display: block;
  width: 12px;
  height: 13px;
  margin: 0 auto;
}

.journal thead tr:last-child th, .journal th[rowspan] {
  border-bottom-color: #000;
}

.journal tbody tr:last-child td, .journal td[rowspan] {
  border-bottom-color: #9c9888;
}

.journal tbody:nth-of-type(even) {
  background-color: #eff4e3;
}

.journal .current tr:last-child td, .journal .current td[rowspan] {
  border-bottom-color: #000;
}

.journal td[rowspan] {
  padding: 0;
}

.journal .mark {
  background-color: #f3eef0;
}

.journal .current .mark {
  border-left: 1px solid #000;
}

.journal tr:first-child td:nth-child(4), .journal tr:first-child td:nth-child(6) {
  text-align: right;
}

.journal .edit {
  padding: 0;
}

.edit input {
  display: block;
  width: 100%;
  height: 22px;
  background: linear-gradient(#000, #000) 1px 1px / 1px 16px no-repeat #ffffb4;
}

.journal tfoot td {
  height: 25px;
  border-top: 2px solid #fffbee;
  border-bottom: none;
  background-color: #dbd4cc;
  text-align: right;
}

.hscroll {
  flex: none;
  display: flex;
  height: 22px;
  background-color: #f0f0f0;
}

.hscroll button {
  width: 21px;
}

.hscroll svg {
  display: block;
  width: 8px;
  height: 12px;
  margin: 0 auto;
  fill: none;
  stroke: #505050;
  stroke-width: 2;
}

.htrack {
  flex: 1;
}

.hthumb {
  width: 89%;
  height: 20px;
  margin-top: 1px;
  background-color: #cdcdcd;
}
```
